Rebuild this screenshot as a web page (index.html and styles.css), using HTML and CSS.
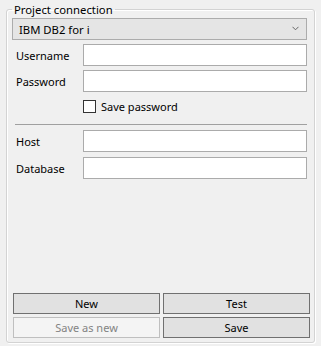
FILE: index.html
```html
<!DOCTYPE html>
<html>
<head>
<meta charset="utf-8">
<link rel="stylesheet" href="styles.css">
</head>
<body>
<fieldset class="group">
  <legend class="group-title">Project connection</legend>
  <div class="combo">
    <span class="combo-text">IBM DB2 for i</span>
    <svg class="chevron" width="7" height="5" viewBox="0 0 7 5"><polyline points="0.5,0.8 3.5,3.8 6.5,0.8" fill="none" stroke="#666" stroke-width="1"/></svg>
  </div>
  <div class="form-row row-first"><span class="label">Username</span><div class="field"></div></div>
  <div class="form-row row-pass"><span class="label">Password</span><div class="field"></div></div>
  <div class="check-row"><span class="checkbox"></span><span class="check-label">Save password</span></div>
  <div class="separator"></div>
  <div class="form-row row-host"><span class="label">Host</span><div class="field"></div></div>
  <div class="form-row row-db"><span class="label">Database</span><div class="field"></div></div>
  <div class="spacer"></div>
  <div class="button-row"><div class="btn">New</div><div class="btn">Test</div></div>
  <div class="button-row row-second"><div class="btn btn-disabled">Save as new</div><div class="btn">Save</div></div>
</fieldset>
</body>
</html>
```
FILE: styles.css
```css
html, body {
  margin: 0;
  padding: 0;
}
body {
  width: 321px;
  height: 346px;
  background: #f0f0f0;
  font-family: "Noto Sans", "DejaVu Sans", sans-serif;
  font-size: 11px;
  color: #000;
  display: flex;
  flex-direction: column;
}
.group {
  flex: 1;
  margin: 2px 6px 3px 6px;
  padding: 1px 0 4px 0;
  min-width: 0;
  border: 1px solid #d3d3d3;
  border-radius: 3px;
  box-shadow: 1px 1px 0 #ffffff, inset 1px 1px 0 #ffffff;
  display: flex;
  flex-direction: column;
}
.group-title {
  margin-left: 5px;
  padding: 0 2px;
  height: 15px;
  line-height: 15px;
  font-size: 11.3px;
}
.combo {
  margin: 0 7px 0 5px;
  height: 22px;
  box-sizing: border-box;
  border: 1px solid #acacac;
  background: #e5e5e5;
  display: flex;
  align-items: center;
  justify-content: space-between;
  padding: 0 7px 0 6px;
}
.combo-text {
  font-size: 11.3px;
}
.chevron {
  display: block;
  margin-top: -1px;
}
.form-row {
  display: flex;
  align-items: center;
  margin-right: 7px;
}
.row-first { margin-top: 4px; }
.row-pass { margin-top: 4px; }
.row-host { margin-top: 5px; }
.row-db { margin-top: 5px; }
.label {
  width: 76px;
  box-sizing: border-box;
  padding-left: 9px;
  font-size: 11px;
}
.field {
  flex: 1;
  height: 22px;
  box-sizing: border-box;
  border: 1px solid #ababab;
  background: #fff;
}
.check-row {
  display: flex;
  align-items: center;
  margin: 8px 0 0 76px;
  height: 13px;
}
.checkbox {
  width: 13px;
  height: 13px;
  box-sizing: border-box;
  border: 1px solid #333;
  background: #fff;
}
.check-label {
  margin-left: 5px;
  font-size: 11px;
}
.separator {
  margin: 11px 7px 0 8px;
  height: 1px;
  background: #a0a0a0;
}
.spacer {
  flex: 1;
}
.button-row {
  display: flex;
  gap: 3px;
  margin: 0 4px 0 6px;
}
.row-second {
  margin-top: 3px;
}
.btn {
  flex: 1;
  height: 21px;
  box-sizing: border-box;
  border: 1px solid #707070;
  background: #e1e1e1;
  display: flex;
  align-items: center;
  justify-content: center;
  font-size: 11px;
}
.btn-disabled {
  border-color: #bfbfbf;
  background: #f4f4f4;
  color: #838383;
}
```
